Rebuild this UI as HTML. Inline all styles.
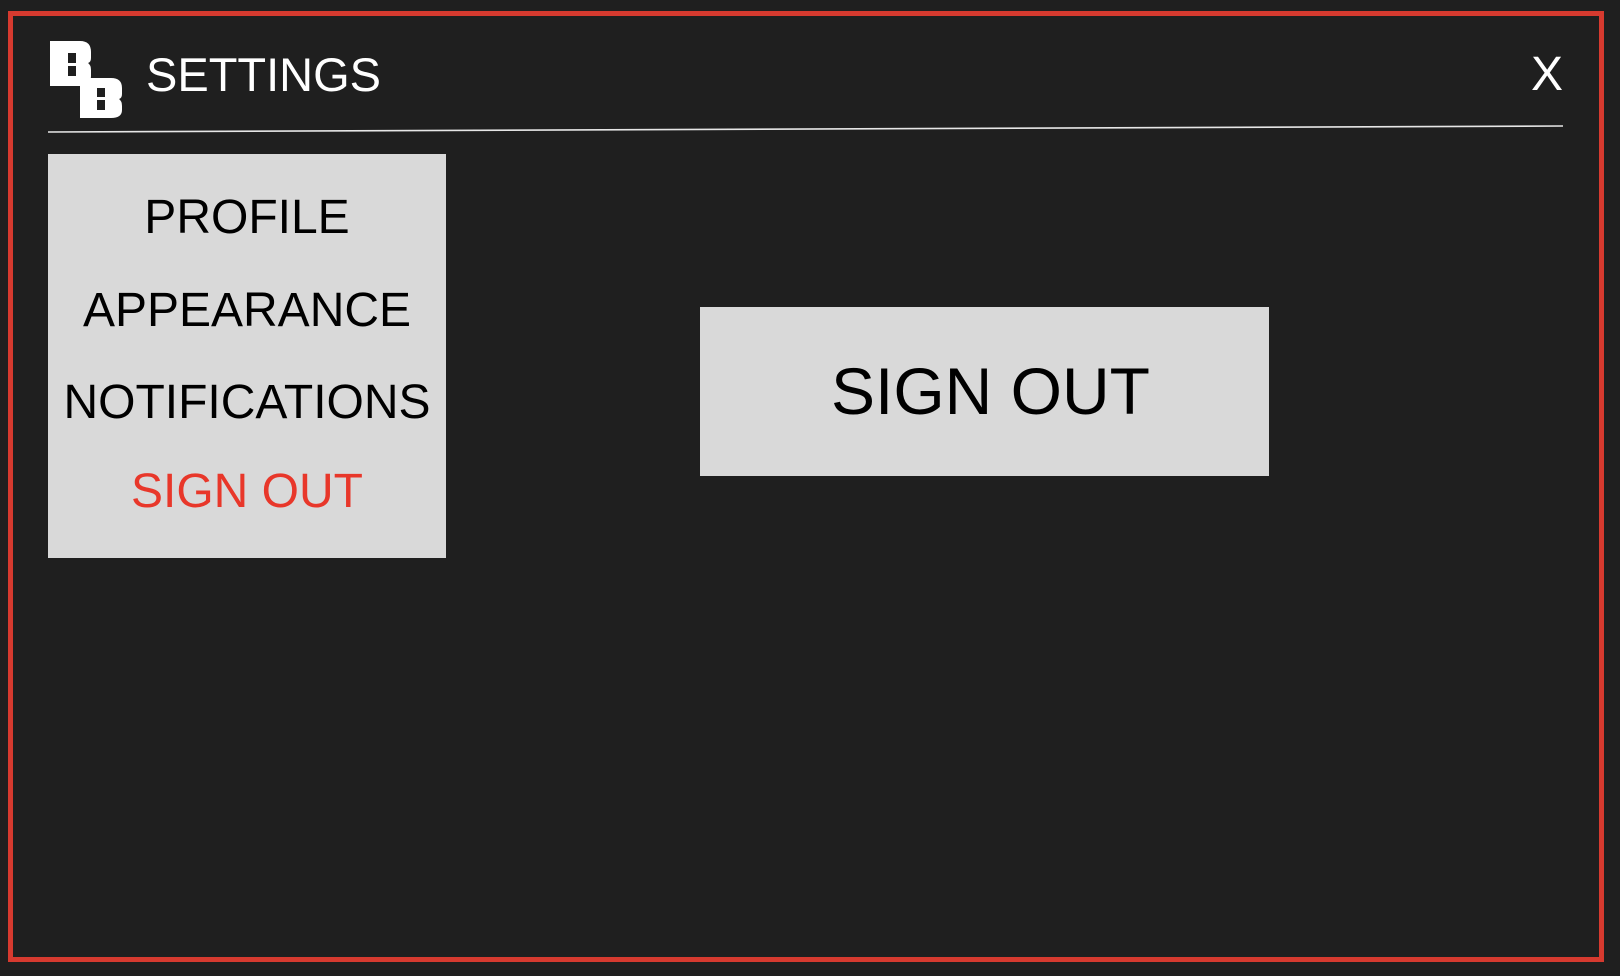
<!DOCTYPE html>
<html><head><meta charset="utf-8"><style>
html,body{margin:0;padding:0;width:1620px;height:976px;background:#1f1f1f;overflow:hidden}
body{position:relative;font-family:"Liberation Sans",Arial,sans-serif}
.frame{position:absolute;left:8px;top:11px;width:1586px;height:941px;border:5px solid #d63a2f}
.t{position:absolute;white-space:nowrap;line-height:1}
.panel{position:absolute;left:48px;top:154px;width:398px;height:404px;background:#d9d9d9}
.btn{position:absolute;left:700px;top:307px;width:569px;height:169px;background:#d9d9d9}
.m{position:absolute;left:0;width:398px;text-align:center;font-size:48px;color:#000}
</style></head><body>
<div class="frame"></div>
<svg style="position:absolute;left:0;top:0" width="1620" height="976">
<path fill="#fff" fill-rule="evenodd" d="M50 41H80Q91 41 91 52V58Q91 62 88 63Q91 65 91 70V76Q91 86 80 86H50Z M68 53V63H76V53Z M68 66V76H76V66Z"/>
<path fill="#fff" fill-rule="evenodd" d="M80 78H111Q122 78 122 88V94Q122 98 119 99Q122 101 122 106V110Q122 118 111 118H80Z M97 88V97H105V88Z M97 100V110H105V100Z"/>
<line x1="48" y1="132" x2="1563" y2="126" stroke="#e6e6e6" stroke-width="1.6"/>
</svg>
<div class="t" style="left:146px;top:51px;font-size:47px;color:#fff">SETTINGS</div>
<div class="t" style="left:1531px;top:51px;font-size:48px;color:#fff">X</div>
<div class="panel">
<div class="m" style="top:36px">PROFILE</div>
<div class="m" style="top:129px">APPEARANCE</div>
<div class="m" style="top:221px">NOTIFICATIONS</div>
<div class="m" style="top:310px;color:#e8372a">SIGN OUT</div>
</div>
<div class="btn"><div class="t" style="left:6px;width:569px;text-align:center;top:51px;font-size:66px;color:#000">SIGN OUT</div></div>
</body></html>
